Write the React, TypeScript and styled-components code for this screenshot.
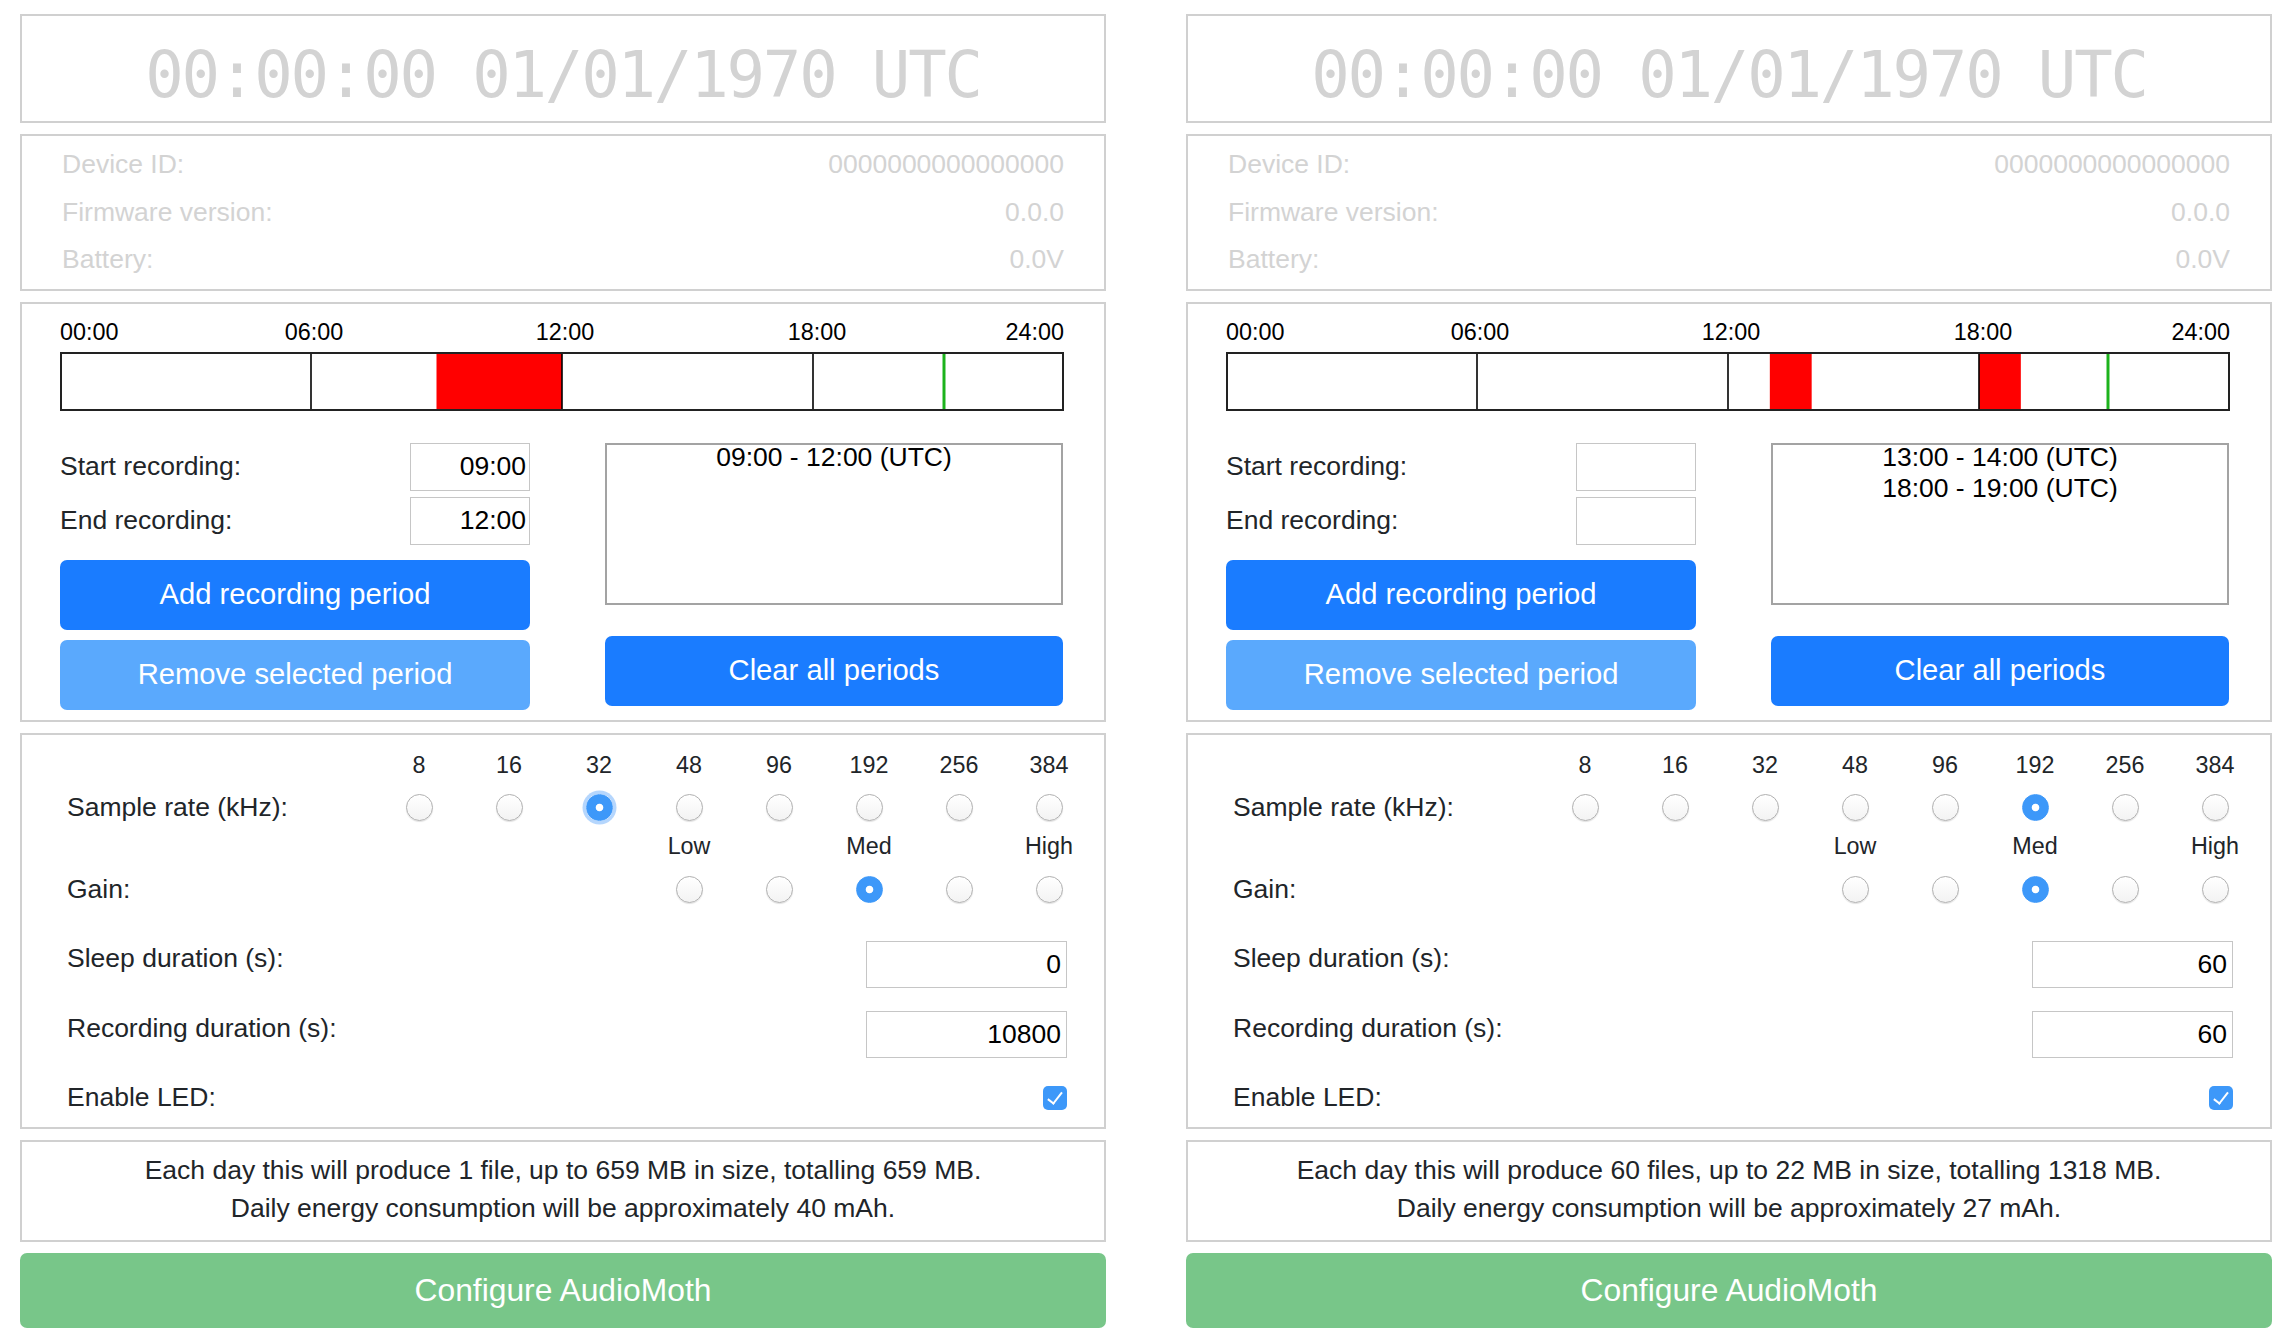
import React from "react";
import styled, { createGlobalStyle } from "styled-components";

const GlobalStyle = createGlobalStyle`
  html, body {
    margin: 0;
    padding: 0;
    background: #fff;
  }
  body {
    font-family: "Liberation Sans", Arial, Helvetica, sans-serif;
    color: #212529;
  }
  * {
    box-sizing: border-box;
  }
`;

const Page = styled.div`
  display: grid;
  grid-template-columns: 1086px 1086px;
  column-gap: 80px;
  padding: 14px 0 0 20px;
  width: 2290px;
`;

const Column = styled.div`
  display: flex;
  flex-direction: column;
  gap: 11px;
`;

const Panel = styled.section`
  border: 2px solid #d0d0d0;
  background: #fff;
`;

const ClockPanel = styled(Panel)`
  height: 109px;
  padding-top: 22px;
  text-align: center;
  font-family: "DejaVu Sans Mono", "Liberation Mono", monospace;
  font-size: 64px;
  letter-spacing: -2.2px;
  line-height: 75px;
  color: #d3d3d3;
  white-space: nowrap;
`;

const InfoPanel = styled(Panel)`
  padding: 5px 40px;
  font-size: 26.5px;
  color: #d3d3d3;
`;

const InfoRow = styled.div`
  display: flex;
  justify-content: space-between;
  line-height: 47.5px;
`;

const SchedulePanel = styled(Panel)`
  padding: 12px 38px 10px;
  font-size: 26.5px;
`;

const TimelineSvg = styled.svg`
  display: block;
  font-family: "Liberation Sans", Arial, sans-serif;
  font-size: 23.4px;
`;

const ScheduleBody = styled.div`
  display: grid;
  grid-template-columns: 470px 458px;
  column-gap: 75px;
  margin-top: 31px;
`;

const Stack = styled.div`
  display: flex;
  flex-direction: column;
`;

const TimeRow = styled.div`
  display: flex;
  justify-content: space-between;
  align-items: center;

  & + & {
    margin-top: 6px;
  }
`;

const TimeInput = styled.input`
  width: 120px;
  height: 48px;
  border: 1px solid #c6c6c6;
  padding: 0 3px 0 0;
  text-align: right;
  font-family: inherit;
  font-size: 26.5px;
  color: #000;
  background: #fff;
`;

const ActionButton = styled.button<{ $muted?: boolean; $gap: number }>`
  height: 70px;
  margin-top: ${({ $gap }) => $gap}px;
  border: none;
  border-radius: 7px;
  background: ${({ $muted }) => ($muted ? "#5aa9fd" : "#1a7cff")};
  color: #fff;
  font-family: inherit;
  font-size: 29.2px;
  cursor: pointer;
`;

const PeriodList = styled.div`
  height: 162px;
  border: 2px solid #a3a3a3;
  color: #000;
  text-align: center;
  line-height: 31.6px;
`;

const PeriodItem = styled.div`
  &:first-child {
    margin-top: -3px;
  }
`;

const SettingsPanel = styled(Panel)`
  padding: 13px 37px 0 45px;
  font-size: 26.5px;
`;

const RateGrid = styled.div`
  display: grid;
  grid-template-columns: 1fr repeat(8, 36px);
  grid-template-rows: 36px 48px 30px 56px;
  column-gap: 54px;
  align-items: center;
  justify-items: center;
`;

const RowLabel = styled.div<{ $row: number }>`
  grid-column: 1;
  grid-row: ${({ $row }) => $row};
  justify-self: start;
`;

const HeadLabel = styled.div<{ $row: number; $col: number }>`
  grid-row: ${({ $row }) => $row};
  grid-column: ${({ $col }) => $col};
  font-size: 23.3px;
  white-space: nowrap;
`;

const Radio = styled.input<{ $row: number; $col: number; $ring?: boolean }>`
  grid-row: ${({ $row }) => $row};
  grid-column: ${({ $col }) => $col};
  appearance: none;
  width: 27px;
  height: 27px;
  margin: 0;
  border-radius: 50%;
  border: 1px solid #b0b0b0;
  background: linear-gradient(#ffffff, #f3f3f3);
  box-shadow: 0 1px 1px rgba(0, 0, 0, 0.12);

  &:checked {
    border-color: #3d98f9;
    background: radial-gradient(circle, #fff 0 3.4px, #3d98f9 4.2px);
    box-shadow: ${({ $ring }) =>
      $ring ? "0 0 0 3.5px rgba(90, 165, 250, 0.45)" : "none"};
  }
`;

const FieldRow = styled.div<{ $height?: number }>`
  display: flex;
  justify-content: space-between;
  align-items: center;
  margin-top: 11px;
  ${({ $height }) => ($height ? `height: ${$height}px;` : "")}
`;

const NumberInput = styled.input`
  width: 201px;
  height: 47px;
  margin-top: 12px;
  border: 1px solid #c6c6c6;
  padding: 0 5px 0 0;
  text-align: right;
  font-family: inherit;
  font-size: 26.5px;
  color: #000;
  background: #fff;
`;

const CheckBox = styled.input`
  appearance: none;
  position: relative;
  width: 24px;
  height: 24px;
  margin: 0;
  border-radius: 5px;
  background: #3d98f9;

  &::after {
    content: "";
    position: absolute;
    left: 8px;
    top: 3px;
    width: 6px;
    height: 13px;
    border: solid #fff;
    border-width: 0 2.5px 2.5px 0;
    transform: rotate(38deg);
  }
`;

const SummaryPanel = styled(Panel)`
  padding: 9px 0 13px;
  text-align: center;
  font-size: 26.5px;
  line-height: 38px;
`;

const ConfigureButton = styled.button`
  height: 75px;
  width: 100%;
  border: none;
  border-radius: 7px;
  background: #78c689;
  color: #fff;
  font-family: inherit;
  font-size: 31.8px;
  cursor: pointer;
`;

const BAR_W = 1004;
const hx = (h: number) => (h / 24) * BAR_W;
const pad = (n: number) => String(n).padStart(2, "0");

const RATES = [8, 16, 32, 48, 96, 192, 256, 384];
const GAIN_LABELS: [string, number][] = [
  ["Low", 5],
  ["Med", 7],
  ["High", 9],
];

type Config = {
  id: string;
  start: string;
  end: string;
  periods: [number, number][];
  now: number;
  rateIndex: number;
  rateRing: boolean;
  gainIndex: number;
  sleep: string;
  recording: string;
  summary: [string, string];
};

const configs: Config[] = [
  {
    id: "a",
    start: "09:00",
    end: "12:00",
    periods: [[9, 12]],
    now: 884,
    rateIndex: 2,
    rateRing: true,
    gainIndex: 2,
    sleep: "0",
    recording: "10800",
    summary: [
      "Each day this will produce 1 file, up to 659 MB in size, totalling 659 MB.",
      "Daily energy consumption will be approximately 40 mAh.",
    ],
  },
  {
    id: "b",
    start: "",
    end: "",
    periods: [
      [13, 14],
      [18, 19],
    ],
    now: 882,
    rateIndex: 5,
    rateRing: false,
    gainIndex: 2,
    sleep: "60",
    recording: "60",
    summary: [
      "Each day this will produce 60 files, up to 22 MB in size, totalling 1318 MB.",
      "Daily energy consumption will be approximately 27 mAh.",
    ],
  },
];

function Timeline({ periods, now }: { periods: [number, number][]; now: number }) {
  return (
    <TimelineSvg width={BAR_W} height={96} viewBox={`0 0 ${BAR_W} 96`}>
      <text x={0} y={24} fill="#000">00:00</text>
      <text x={hx(6) + 3} y={24} fill="#000" textAnchor="middle">06:00</text>
      <text x={hx(12) + 3} y={24} fill="#000" textAnchor="middle">12:00</text>
      <text x={hx(18) + 4} y={24} fill="#000" textAnchor="middle">18:00</text>
      <text x={BAR_W} y={24} fill="#000" textAnchor="end">24:00</text>
      <rect x={1} y={37} width={BAR_W - 2} height={57} fill="#fff" />
      {periods.map(([s, e]) => (
        <rect key={s} x={hx(s)} y={37} width={hx(e) - hx(s)} height={57} fill="#ff0000" />
      ))}
      {[6, 12, 18].map((h) => (
        <line key={h} x1={hx(h)} x2={hx(h)} y1={37} y2={94} stroke="#000" strokeWidth={1.6} />
      ))}
      <line x1={now} x2={now} y1={37} y2={94} stroke="#1db31d" strokeWidth={3} />
      <rect x={1} y={37} width={BAR_W - 2} height={57} fill="none" stroke="#222" strokeWidth={2} />
    </TimelineSvg>
  );
}

function AudioMothPanel({ config }: { config: Config }) {
  return (
    <Column>
      <ClockPanel>00:00:00 01/01/1970 UTC</ClockPanel>

      <InfoPanel>
        <InfoRow>
          <span>Device ID:</span>
          <span>0000000000000000</span>
        </InfoRow>
        <InfoRow>
          <span>Firmware version:</span>
          <span>0.0.0</span>
        </InfoRow>
        <InfoRow>
          <span>Battery:</span>
          <span>0.0V</span>
        </InfoRow>
      </InfoPanel>

      <SchedulePanel>
        <Timeline periods={config.periods} now={config.now} />
        <ScheduleBody>
          <Stack>
            <TimeRow>
              <span>Start recording:</span>
              <TimeInput defaultValue={config.start} />
            </TimeRow>
            <TimeRow>
              <span>End recording:</span>
              <TimeInput defaultValue={config.end} />
            </TimeRow>
            <ActionButton $gap={15}>Add recording period</ActionButton>
            <ActionButton $gap={10} $muted>
              Remove selected period
            </ActionButton>
          </Stack>
          <Stack>
            <PeriodList>
              {config.periods.map(([s, e]) => (
                <PeriodItem key={s}>
                  {pad(s)}:00 - {pad(e)}:00 (UTC)
                </PeriodItem>
              ))}
            </PeriodList>
            <ActionButton $gap={31}>Clear all periods</ActionButton>
          </Stack>
        </ScheduleBody>
      </SchedulePanel>

      <SettingsPanel>
        <RateGrid>
          {RATES.map((rate, i) => (
            <HeadLabel key={rate} $row={1} $col={i + 2}>
              {rate}
            </HeadLabel>
          ))}
          <RowLabel $row={2}>Sample rate (kHz):</RowLabel>
          {RATES.map((rate, i) => (
            <Radio
              key={rate}
              type="radio"
              name={`rate-${config.id}`}
              $row={2}
              $col={i + 2}
              $ring={config.rateRing}
              defaultChecked={i === config.rateIndex}
            />
          ))}
          {GAIN_LABELS.map(([label, col]) => (
            <HeadLabel key={label} $row={3} $col={col}>
              {label}
            </HeadLabel>
          ))}
          <RowLabel $row={4}>Gain:</RowLabel>
          {[0, 1, 2, 3, 4].map((g) => (
            <Radio
              key={g}
              type="radio"
              name={`gain-${config.id}`}
              $row={4}
              $col={g + 5}
              defaultChecked={g === config.gainIndex}
            />
          ))}
        </RateGrid>
        <FieldRow>
          <span>Sleep duration (s):</span>
          <NumberInput defaultValue={config.sleep} />
        </FieldRow>
        <FieldRow>
          <span>Recording duration (s):</span>
          <NumberInput defaultValue={config.recording} />
        </FieldRow>
        <FieldRow $height={58}>
          <span>Enable LED:</span>
          <CheckBox type="checkbox" defaultChecked />
        </FieldRow>
      </SettingsPanel>

      <SummaryPanel>
        <div>{config.summary[0]}</div>
        <div>{config.summary[1]}</div>
      </SummaryPanel>

      <ConfigureButton>Configure AudioMoth</ConfigureButton>
    </Column>
  );
}

export default function App() {
  return (
    <>
      <GlobalStyle />
      <Page>
        {configs.map((c) => (
          <AudioMothPanel key={c.id} config={c} />
        ))}
      </Page>
    </>
  );
}
